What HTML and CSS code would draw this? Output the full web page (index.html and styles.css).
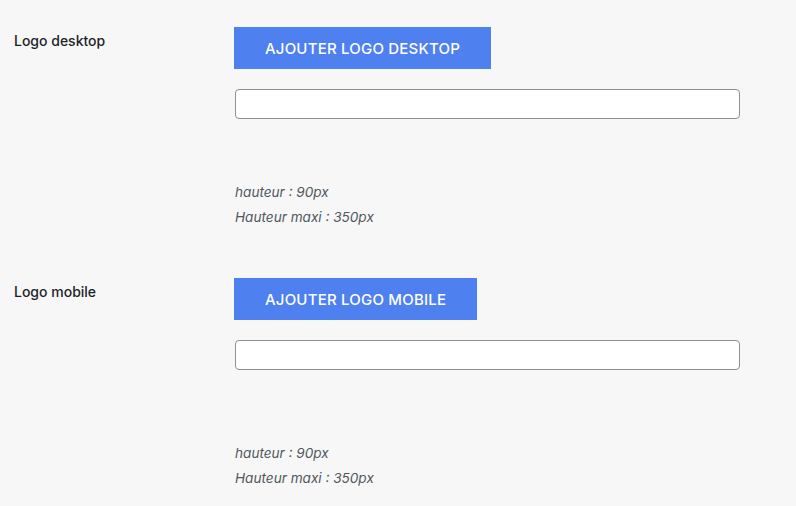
FILE: index.html
```html
<!DOCTYPE html>
<html lang="fr">
<head>
<meta charset="utf-8">
<title>Logos</title>
<link rel="stylesheet" href="styles.css">
</head>
<body>
<div class="form">
  <div class="row first">
    <div class="label">Logo desktop</div>
    <div class="field">
      <button class="btn" type="button">AJOUTER LOGO DESKTOP</button>
      <input class="text-input" type="text">
      <div class="preview"></div>
      <p class="hint">hauteur : 90px<br>Hauteur maxi : 350px</p>
    </div>
  </div>
  <div class="row second">
    <div class="label">Logo mobile</div>
    <div class="field">
      <button class="btn" type="button">AJOUTER LOGO MOBILE</button>
      <input class="text-input" type="text">
      <div class="preview tall"></div>
      <p class="hint">hauteur : 90px<br>Hauteur maxi : 350px</p>
    </div>
  </div>
</div>
</body>
</html>
```
FILE: styles.css
```css
html, body {
  margin: 0;
  padding: 0;
  background: #f7f7f7;
  font-family: Inter, "Liberation Sans", sans-serif;
  color: #1d2327;
}
.form {
  padding-left: 14px;
}
.row {
  display: flex;
}
.row.first {
  padding-top: 27px;
}
.row.second {
  padding-top: 48px;
}
.label {
  width: 220px;
  flex: none;
  font-size: 14px;
  font-weight: 500;
  line-height: 20px;
  margin-top: 4px;
}
.field {
  width: 506px;
  display: flex;
  flex-direction: column;
  align-items: flex-start;
}
.btn {
  height: 42px;
  padding: 0 31px;
  border: none;
  border-radius: 0;
  background: #4f80ef;
  color: #fff;
  font-family: Inter, "Liberation Sans", sans-serif;
  font-size: 15px;
  font-weight: 500;
  letter-spacing: 0.2px;
  margin-bottom: 20px;
  margin-left: 0;
}
.text-input {
  box-sizing: border-box;
  width: 505px;
  height: 30px;
  margin: 0 0 0 1px;
  border: 1px solid #8c8f94;
  border-radius: 4px;
  background: #fff;
}
.preview {
  height: 61px;
}
.preview.tall {
  height: 71px;
}
.hint {
  margin: 0 0 0 1px;
  font-size: 13.6px;
  font-style: italic;
  line-height: 25px;
  color: #50575e;
}
```
